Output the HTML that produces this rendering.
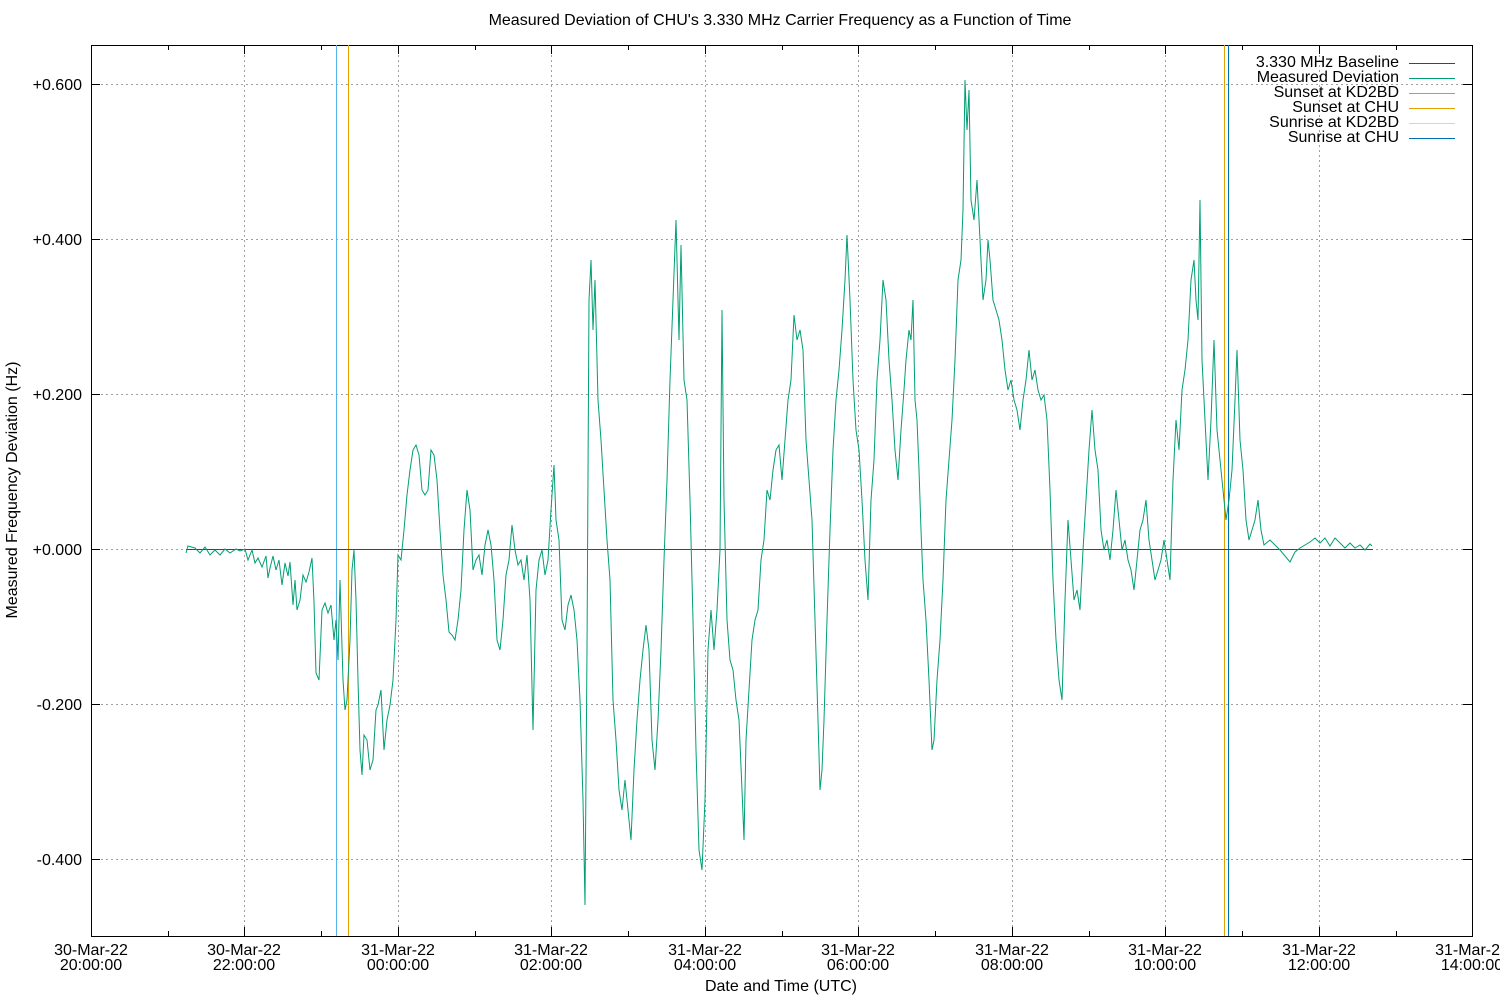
<!DOCTYPE html>
<html><head><style>html,body{margin:0;padding:0;background:#fff}svg{display:block}text{font-family:"Liberation Sans",Arial,sans-serif;fill:#000}</style></head>
<body>
<svg width="1500" height="1000" viewBox="0 0 1500 1000" xmlns="http://www.w3.org/2000/svg">
<rect width="1500" height="1000" fill="#fff"/>
<text x="780" y="25" font-size="16" text-anchor="middle">Measured Deviation of CHU's 3.330 MHz Carrier Frequency as a Function of Time</text>
<g stroke="#a0a0a0" stroke-width="1" stroke-dasharray="2,3" shape-rendering="crispEdges">
<line x1="91" y1="84.5" x2="1472" y2="84.5"/><line x1="91" y1="239.5" x2="1472" y2="239.5"/><line x1="91" y1="394.5" x2="1472" y2="394.5"/><line x1="91" y1="549.5" x2="1472" y2="549.5"/><line x1="91" y1="704.5" x2="1472" y2="704.5"/><line x1="91" y1="859.5" x2="1472" y2="859.5"/>
<line x1="244.5" y1="45" x2="244.5" y2="936"/><line x1="398.5" y1="45" x2="398.5" y2="936"/><line x1="551.5" y1="45" x2="551.5" y2="936"/><line x1="705.5" y1="45" x2="705.5" y2="936"/><line x1="858.5" y1="45" x2="858.5" y2="936"/><line x1="1012.5" y1="45" x2="1012.5" y2="936"/><line x1="1165.5" y1="45" x2="1165.5" y2="936"/><line x1="1319.5" y1="45" x2="1319.5" y2="936"/>
</g>
<g stroke="#000" stroke-width="1" shape-rendering="crispEdges">
<rect x="91.5" y="45.5" width="1381" height="891" fill="none"/>
<path d="M91 84.5h9M1472 84.5h-9M91 239.5h9M1472 239.5h-9M91 394.5h9M1472 394.5h-9M91 549.5h9M1472 549.5h-9M91 704.5h9M1472 704.5h-9M91 859.5h9M1472 859.5h-9"/>
<path d="M244.5 936v-9M398.5 936v-9M551.5 936v-9M705.5 936v-9M858.5 936v-9M1012.5 936v-9M1165.5 936v-9M1319.5 936v-9M244.5 45v9M398.5 45v9M551.5 45v9M705.5 45v9M858.5 45v9M1012.5 45v9M1165.5 45v9M1319.5 45v9"/>
<path d="M168.5 936v-5M321.5 936v-5M475.5 936v-5M628.5 936v-5M782.5 936v-5M935.5 936v-5M1089.5 936v-5M1242.5 936v-5M1396.5 936v-5M168.5 45v5M321.5 45v5M475.5 45v5M628.5 45v5M782.5 45v5M935.5 45v5M1089.5 45v5M1242.5 45v5M1396.5 45v5"/>
</g>
<g font-size="16" text-anchor="end">
<text x="82" y="90">+0.600</text><text x="82" y="245">+0.400</text><text x="82" y="400">+0.200</text><text x="82" y="555">+0.000</text><text x="82" y="710">-0.200</text><text x="82" y="865">-0.400</text>
</g>
<g font-size="16" text-anchor="middle">
<text x="91" y="955">30-Mar-22</text><text x="91" y="970">20:00:00</text>
<text x="244" y="955">30-Mar-22</text><text x="244" y="970">22:00:00</text>
<text x="398" y="955">31-Mar-22</text><text x="398" y="970">00:00:00</text>
<text x="551" y="955">31-Mar-22</text><text x="551" y="970">02:00:00</text>
<text x="705" y="955">31-Mar-22</text><text x="705" y="970">04:00:00</text>
<text x="858" y="955">31-Mar-22</text><text x="858" y="970">06:00:00</text>
<text x="1012" y="955">31-Mar-22</text><text x="1012" y="970">08:00:00</text>
<text x="1165" y="955">31-Mar-22</text><text x="1165" y="970">10:00:00</text>
<text x="1319" y="955">31-Mar-22</text><text x="1319" y="970">12:00:00</text>
<text x="1472" y="955">31-Mar-22</text><text x="1472" y="970">14:00:00</text>
<text x="781" y="991">Date and Time (UTC)</text>
</g>
<text font-size="16" text-anchor="middle" transform="translate(17,490) rotate(-90)">Measured Frequency Deviation (Hz)</text>
<line x1="336.5" y1="45" x2="336.5" y2="936" stroke="#56b4e9"/>
<line x1="348.5" y1="45" x2="348.5" y2="936" stroke="#e69f00"/>
<line x1="1224.5" y1="45" x2="1224.5" y2="936" stroke="#e69f00"/>
<line x1="1228.5" y1="45" x2="1228.5" y2="936" stroke="#0072b2"/>
<line x1="186" y1="549.5" x2="1373" y2="549.5" stroke="#9400d3"/>
<polyline fill="none" stroke="#009e73" stroke-width="1" points="186,553 188,546 195,548 200,553 205,547 210,555 215,550 220,555 225,549 230,553 236,549 240,551 245,549 248,560 252,550 255,563 258,558 262,567 266,556 268,578 270,568 273,556 276,570 279,560 282,585 285,563 288,576 290,562 293,605 295,580 297,610 300,600 303,575 306,582 309,572 312,558 314,602 316,673 319,680 322,610 325,603 328,613 331,605 334,640 336,620 338,660 340,580 343,680 345,710 347,700 350,640 352,570 354,550 356,600 358,680 360,750 362,775 364,735 367,740 370,770 373,760 376,710 378,705 381,690 384,750 387,720 390,705 393,680 396,620 398,555 401,560 404,530 407,495 410,470 413,450 416,445 419,455 422,490 425,495 428,490 431,450 434,455 437,480 440,530 443,575 446,600 449,632 452,635 455,640 458,620 461,590 464,530 467,490 470,510 473,570 476,560 479,555 482,575 485,545 488,530 491,545 494,580 497,640 500,650 503,620 506,575 509,560 512,525 515,550 518,565 521,560 524,580 527,555 530,600 533,730 536,590 539,560 542,550 545,575 548,560 551,510 554,465 556,520 559,540 562,620 565,630 568,605 571,595 574,610 577,640 580,700 583,800 585,905 587,650 589,300 591,260 593,330 595,280 598,400 601,440 604,490 607,540 610,580 613,700 616,740 619,790 622,810 625,780 628,810 631,840 634,770 637,720 640,680 643,650 646,625 649,650 652,740 655,770 658,720 661,650 664,560 667,480 670,380 673,300 676,220 679,340 681,245 684,380 687,400 690,500 693,620 696,750 699,850 702,870 705,800 708,650 711,610 714,650 717,610 720,550 722,310 724,500 727,620 730,660 733,670 736,700 739,720 742,790 744,840 746,740 749,690 752,640 755,620 758,610 761,560 764,540 767,490 770,500 773,470 776,450 779,445 782,480 785,440 788,400 791,380 794,315 797,340 800,330 803,350 806,440 809,480 812,520 815,620 818,720 820,790 822,770 824,720 827,620 830,530 833,450 836,400 839,370 842,330 845,280 847,235 850,300 853,380 856,430 859,450 862,500 865,560 868,600 871,500 874,460 877,380 880,340 883,280 886,300 889,360 892,400 895,450 898,480 901,430 904,390 906,360 909,330 911,340 913,300 915,400 917,420 919,470 921,530 923,580 926,620 929,680 932,750 934,740 937,680 940,640 943,580 946,500 949,460 952,420 955,360 958,280 961,260 963,210 965,80 967,130 969,90 971,200 974,220 977,180 980,240 983,300 986,280 988,240 990,260 993,300 996,310 999,320 1002,340 1005,370 1008,390 1011,380 1014,400 1017,410 1020,430 1023,400 1026,380 1029,350 1032,380 1035,370 1038,390 1041,400 1044,395 1047,420 1050,490 1053,580 1056,640 1059,680 1062,700 1065,600 1068,520 1071,560 1074,600 1077,590 1080,610 1083,550 1086,500 1089,450 1092,410 1095,450 1098,470 1101,530 1104,550 1107,540 1110,560 1113,530 1116,490 1119,520 1122,550 1125,540 1128,560 1131,570 1134,590 1137,560 1140,530 1143,520 1146,500 1149,540 1152,560 1155,580 1158,570 1161,560 1164,540 1167,560 1170,580 1173,480 1176,420 1179,450 1182,390 1185,370 1188,340 1191,280 1194,260 1196,300 1198,320 1200,200 1202,360 1205,420 1208,480 1211,420 1214,340 1217,430 1220,460 1223,490 1226,520 1229,500 1232,470 1235,400 1237,350 1240,440 1243,470 1246,520 1249,540 1252,530 1255,520 1258,500 1261,530 1264,545 1270,540 1275,545 1280,550 1285,556 1290,562 1295,552 1300,548 1305,545 1310,542 1315,538 1320,543 1325,538 1330,546 1335,538 1340,543 1345,548 1350,543 1355,548 1360,545 1365,550 1370,544 1372,546"/>
<g font-size="16" text-anchor="end">
<text x="1399" y="67">3.330 MHz Baseline</text>
<text x="1399" y="82">Measured Deviation</text>
<text x="1399" y="97">Sunset at KD2BD</text>
<text x="1399" y="112">Sunset at CHU</text>
<text x="1399" y="127">Sunrise at KD2BD</text>
<text x="1399" y="142">Sunrise at CHU</text>
</g>
<line x1="1409" y1="63.5" x2="1455" y2="63.5" stroke="#9400d3"/>
<line x1="1409" y1="78.5" x2="1455" y2="78.5" stroke="#009e73"/>
<line x1="1409" y1="93.5" x2="1455" y2="93.5" stroke="#56b4e9"/>
<line x1="1409" y1="108.5" x2="1455" y2="108.5" stroke="#e69f00"/>
<line x1="1409" y1="123.5" x2="1455" y2="123.5" stroke="#f0e442"/>
<line x1="1409" y1="138.5" x2="1455" y2="138.5" stroke="#0072b2"/>
</svg>
</body></html>
